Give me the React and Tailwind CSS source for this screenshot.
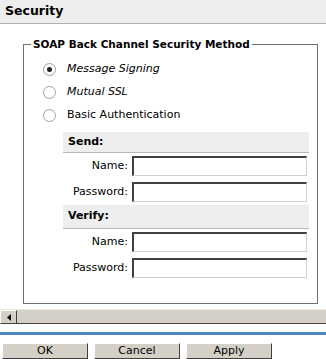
import React from "react";

function Radio({ checked }) {
  return (
    <span className="relative inline-block w-[13px] h-[13px] rounded-full bg-white border border-[#a0a0a0] shrink-0">
      {checked && <span className="absolute left-[3px] top-[3px] w-[5px] h-[5px] rounded-full bg-[#202020]" />}
    </span>
  );
}

function Field({ label }) {
  return (
    <div className="flex items-center h-[26px]">
      <div className="w-[69px] text-right pr-[4px]">{label}</div>
      <div className="w-[175px] h-[20px] bg-white border border-[#d4d0c8] border-t-[#404040] border-l-[#404040] border-t-2 border-l-2" />
    </div>
  );
}

export default function App() {
  return (
    <div className="w-[326px] h-[359px] bg-white overflow-hidden text-[11px] text-[#000]" style={{ fontFamily: '"DejaVu Sans", Verdana, sans-serif' }}>
      <div className="h-[24px] bg-[#eeeeee] border-b border-[#b0b0b0] flex items-center pl-[5px] font-bold text-[12.5px]">Security</div>
      <div className="h-[285px] pt-[13px]">
        <fieldset className="ml-[23px] w-[295px] h-[267px] border border-[#707070] pl-[19px] pr-[8px] pt-[5px]">
          <legend className="ml-[-12px] px-[2px] font-bold text-[10.5px]">SOAP Back Channel Security Method</legend>
          <div className="flex items-center gap-[11px] h-[23px]"><Radio checked /><span className="italic">Message Signing</span></div>
          <div className="flex items-center gap-[11px] h-[23px]"><Radio /><span className="italic">Mutual SSL</span></div>
          <div className="flex items-center gap-[11px] h-[23px]"><Radio /><span>Basic Authentication</span></div>
          <div className="ml-[20px] mt-[5px] w-[246px]">
            <div className="h-[21px] bg-[#eeeeee] border-b border-[#b8b8b8] flex items-center pl-[5px] font-bold">Send:</div>
            <Field label="Name:" />
            <Field label="Password:" />
            <div className="h-[24px] bg-[#eeeeee] border-b border-[#b8b8b8] flex items-center pl-[5px] font-bold">Verify:</div>
            <Field label="Name:" />
            <Field label="Password:" />
          </div>
        </fieldset>
      </div>
      <div className="h-[15px] flex bg-[#d4d0c8] border-t border-[#ece9e0]">
        <div className="w-[17px] h-full border border-[#ffffff] border-r-[#404040] border-b-[#404040] flex items-center justify-center">
          <svg width="4" height="7" viewBox="0 0 4 7"><path d="M4 0 L0 3.5 L4 7 Z" fill="#000" /></svg>
        </div>
        <div className="flex-1 border-b border-[#404040]" />
      </div>
      <div className="h-[8px]" />
      <div className="h-[3px] bg-[#4a86c0]" />
      <div className="flex gap-[6px] pl-[2px] pt-[8px]">
        {["OK", "Cancel", "Apply"].map((b) => (
          <div key={b} className="w-[86px] h-[16px] bg-[#d4d0c8] border border-[#ffffff] border-r-[#404040] border-b-[#404040] flex items-center justify-center text-[11px]">{b}</div>
        ))}
      </div>
    </div>
  );
}
